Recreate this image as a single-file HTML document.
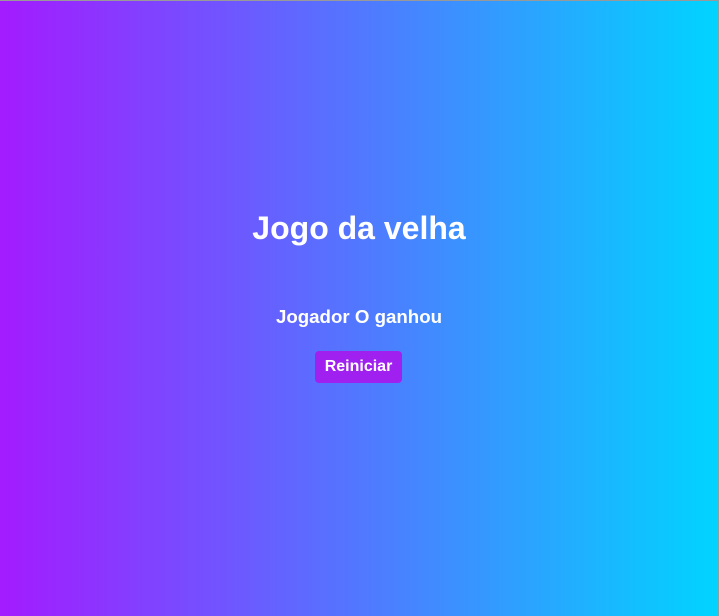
<!DOCTYPE html>
<html><head><meta charset="utf-8"><style>
html,body{margin:0;padding:0;width:719px;height:616px;overflow:hidden}
body{background:#999;font-family:"Liberation Sans",Arial,sans-serif;color:#fff}
.bg{position:absolute;left:0;top:1px;width:718px;height:615px;background:linear-gradient(to right,#a31bff,#00d4ff)}
h1{position:absolute;left:0;width:718px;top:207px;margin:0;text-align:center;font-size:32px;font-weight:bold;line-height:40px}
.s{position:absolute;left:0;width:718px;top:304px;text-align:center;font-size:18.7px;font-weight:bold;line-height:24px}
.b{position:absolute;left:315px;top:350px;width:87px;height:32px;background:#a020f0;border-radius:4px;text-align:center;line-height:32px;font-size:16px;font-weight:bold}
</style></head><body><div class="bg">
<h1>Jogo da velha</h1>
<div class="s">Jogador O ganhou</div>
<div class="b">Reiniciar</div>
</div></body></html>
